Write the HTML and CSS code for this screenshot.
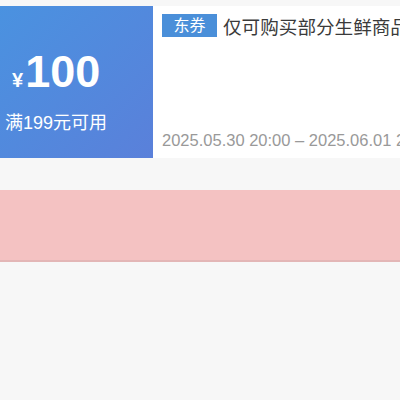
FILE: index.html
```html
<!DOCTYPE html>
<html lang="zh-CN">
<head>
<meta charset="utf-8">
<link rel="stylesheet" href="styles.css">
</head>
<body>
<div class="page">
  <div class="coupon">
    <div class="coupon-left">
      <div class="amount"><span class="currency">¥</span><span class="value">100</span></div>
      <div class="condition">满199元可用</div>
    </div>
    <div class="coupon-right">
      <div class="title-row">
        <span class="tag">东券</span>
        <span class="title">仅可购买部分生鲜商品</span>
      </div>
      <div class="date">2025.05.30 20:00 – 2025.06.01 20:00</div>
    </div>
  </div>
  <div class="gap"></div>
  <div class="banner"></div>
  <div class="rest"></div>
</div>
</body>
</html>
```
FILE: styles.css
```css
html, body {
  margin: 0;
  padding: 0;
  height: 100%;
}
body {
  background: #f7f7f7;
  font-family: "Liberation Sans", "Noto Sans CJK SC", sans-serif;
  overflow: hidden;
}
.page {
  display: flex;
  flex-direction: column;
  height: 100%;
  padding-top: 6px;
  box-sizing: border-box;
}
.coupon {
  display: flex;
  height: 152px;
  background: #ffffff;
}
.coupon-left {
  width: 153px;
  flex: none;
  background: linear-gradient(135deg, #4a92e0 0%, #5a80da 100%);
  color: #ffffff;
  display: flex;
  flex-direction: column;
  padding: 44px 0 0 5px;
  box-sizing: border-box;
}
.amount {
  display: flex;
  align-items: baseline;
  margin-left: 7px;
  height: 44px;
  line-height: 44px;
}
.currency {
  font-size: 20px;
  font-weight: bold;
  margin-right: 2px;
}
.value {
  font-size: 45px;
  font-weight: bold;
}
.condition {
  margin-top: 20px;
  font-size: 18px;
  line-height: 18px;
  white-space: nowrap;
}
.coupon-right {
  flex: 1;
  min-width: 0;
  display: flex;
  flex-direction: column;
  justify-content: space-between;
  padding: 8px 0 9px 9px;
  overflow: hidden;
  white-space: nowrap;
}
.title-row {
  display: flex;
  align-items: center;
  height: 23px;
}
.tag {
  flex: none;
  background: #4a8fd9;
  color: #ffffff;
  font-size: 16px;
  line-height: 23px;
  height: 23px;
  padding: 0 11.5px;
}
.title {
  margin-left: 6px;
  font-size: 18.6px;
  color: #3a3a3a;
}
.date {
  font-size: 16.5px;
  line-height: 18px;
  color: #999999;
}
.gap {
  height: 32px;
  flex: none;
}
.banner {
  height: 70px;
  flex: none;
  background: #f4c2c2;
  border-bottom: 2px solid #e3b6b6;
}
.rest {
  flex: 1;
  background: #f7f7f7;
}
```
